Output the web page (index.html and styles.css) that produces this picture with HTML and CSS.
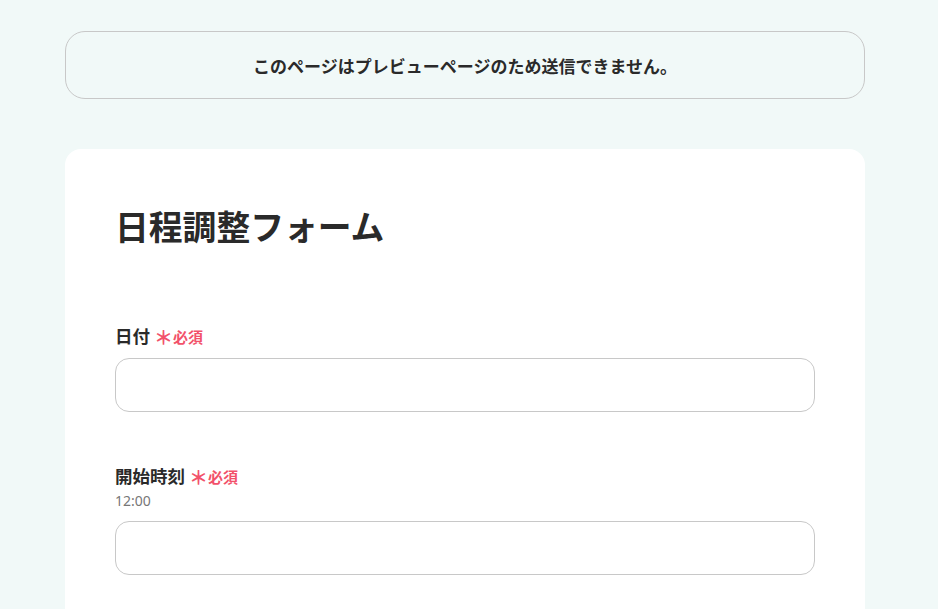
FILE: index.html
```html
<!DOCTYPE html>
<html lang="ja">
<head>
<meta charset="UTF-8">
<meta name="viewport" content="width=device-width, initial-scale=1.0">
<title>日程調整フォーム</title>
<link rel="stylesheet" href="styles.css">
</head>
<body>
<div class="page">
  <div class="preview-notice">このページはプレビューページのため送信できません。</div>

  <form class="form-card">
    <h1 class="form-title">日程調整フォーム</h1>

    <div class="field">
      <div class="field-head">
        <label class="field-label">日付<span class="required"><span class="mark">＊</span>必須</span></label>
      </div>
      <input type="text" class="field-input">
    </div>

    <div class="field">
      <div class="field-head">
        <label class="field-label">開始時刻<span class="required"><span class="mark">＊</span>必須</span></label>
        <div class="field-sub">12:00</div>
      </div>
      <input type="text" class="field-input">
    </div>
  </form>
</div>
</body>
</html>
```

FILE: styles.css
```css
:root {
  --background-color: #f1f9f8;
  --card-color: #ffffff;
  --text-color: #2a2a2a;
  --border-color: #c8c8c8;
  --required-color: #f2516a;
  --sub-color: #777777;
}
body {
  margin: 0;
  background: var(--background-color);
  color: var(--text-color);
  font-family: "Noto Sans CJK JP", "Noto Sans", sans-serif;
}
.page {
  width: 800px;
  padding: 31px 0 0 65px;
}
.preview-notice {
  height: 66px;
  border: 1px solid var(--border-color);
  border-radius: 20px;
  display: flex;
  align-items: center;
  justify-content: center;
  font-size: 17px;
  font-weight: 700;
}
.form-card {
  margin-top: 50px;
  background: var(--card-color);
  border-radius: 16px;
  padding: 51px 50px 60px;
  min-height: 500px;
}
.form-title {
  margin: 0 0 73px;
  font-size: 33.8px;
  line-height: 51px;
  font-weight: 700;
}
.field {
  margin-bottom: 52px;
}
.field-head {
  margin-bottom: 9px;
}
.field-label {
  display: block;
  font-size: 17.5px;
  line-height: 24px;
  font-weight: 700;
}
.required {
  color: var(--required-color);
  font-size: 15px;
  margin-left: 4px;
}
.required .mark {
  font-size: 19px;
  font-weight: 700;
  line-height: 1;
  position: relative;
  top: 2px;
}
.field-sub {
  font-family: "Noto Sans", sans-serif;
  font-size: 14px;
  line-height: 23px;
  color: var(--sub-color);
}
.field-input {
  display: block;
  box-sizing: border-box;
  width: 100%;
  height: 54px;
  margin: 0;
  border: 1px solid var(--border-color);
  border-radius: 14px;
  background: #fff;
  font-size: 16px;
  padding: 0 16px;
}
```
